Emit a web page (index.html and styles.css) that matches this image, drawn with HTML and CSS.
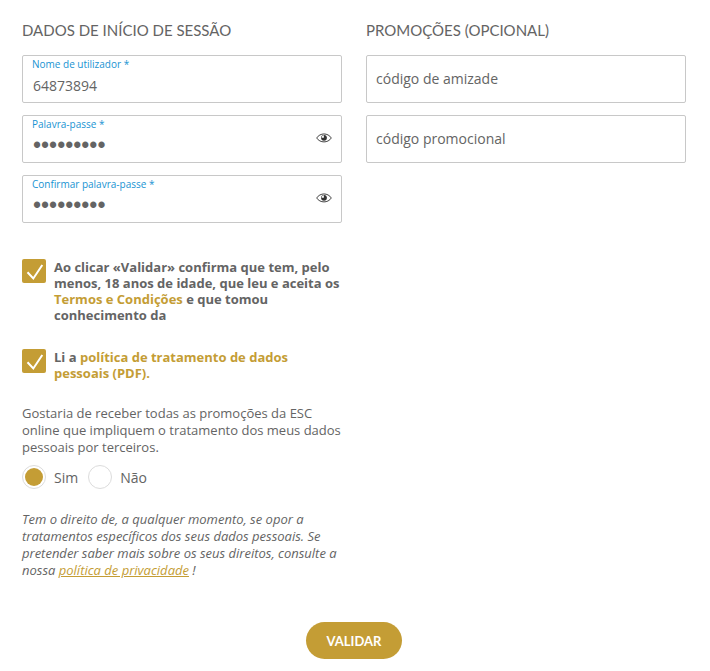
FILE: index.html
```html
<!DOCTYPE html>
<html lang="pt">
<head>
<meta charset="utf-8">
<meta name="viewport" content="width=device-width, initial-scale=1">
<title>Registo</title>
<link rel="stylesheet" href="styles.css">
</head>
<body>
<form class="form">
  <div class="columns">
    <section class="column">
      <h2 class="title">DADOS DE INÍCIO DE SESSÃO</h2>
      <div class="fields">
        <div class="field">
          <label class="field-label" for="user">Nome de utilizador *</label>
          <input class="field-input" id="user" type="text" value="64873894">
        </div>
        <div class="field">
          <label class="field-label" for="pass">Palavra-passe *</label>
          <input class="field-input secret" id="pass" type="password" value="123456789">
          <button class="reveal" type="button" aria-label="Mostrar palavra-passe">
            <svg width="16" height="12" viewBox="0 0 16 12"><path d="M.7 6C4 .6 12 .6 15.3 6 12 11.200 4 11.200.7 6Z" fill="none" stroke="#444" stroke-width="1"/><circle cx="8" cy="5.800" r="2.900" fill="#333"/><path d="M7.900 5.700V3.300A2.500 2.500 0 0 0 5.600 5.700Z" fill="#fff"/></svg>
          </button>
        </div>
        <div class="field">
          <label class="field-label" for="confirm">Confirmar palavra-passe *</label>
          <input class="field-input secret" id="confirm" type="password" value="123456789">
          <button class="reveal" type="button" aria-label="Mostrar confirmação">
            <svg width="16" height="12" viewBox="0 0 16 12"><path d="M.7 6C4 .6 12 .6 15.3 6 12 11.200 4 11.200.7 6Z" fill="none" stroke="#444" stroke-width="1"/><circle cx="8" cy="5.800" r="2.900" fill="#333"/><path d="M7.900 5.700V3.300A2.500 2.500 0 0 0 5.600 5.700Z" fill="#fff"/></svg>
          </button>
        </div>
      </div>

      <div class="consents">
        <div class="consent">
          <span class="check">
            <input class="check-input" id="terms" type="checkbox" checked>
            <svg class="check-mark" viewBox="0 0 24 24"><path d="M5.500 13.300 11.300 19.500 20.300 6" fill="none" stroke="#fff" stroke-width="2"/></svg>
          </span>
          <label class="consent-text" for="terms">Ao clicar «Validar» confirma que tem, pelo menos, 18 anos de idade, que leu e aceita os <a class="link" href="#">Termos e Condições</a> e que tomou conhecimento da</label>
        </div>
        <div class="consent">
          <span class="check">
            <input class="check-input" id="policy" type="checkbox" checked>
            <svg class="check-mark" viewBox="0 0 24 24"><path d="M5.500 13.300 11.300 19.500 20.300 6" fill="none" stroke="#fff" stroke-width="2"/></svg>
          </span>
          <label class="consent-text" for="policy">Li a <a class="link" href="#">política de tratamento de dados pessoais (PDF).</a></label>
        </div>
      </div>

      <p class="question" id="question">Gostaria de receber todas as promoções da ESC online que impliquem o tratamento dos meus dados pessoais por terceiros.</p>
      <div class="options" role="radiogroup" aria-labelledby="question">
        <label class="option"><input class="radio" type="radio" name="promo" checked>Sim</label>
        <label class="option"><input class="radio" type="radio" name="promo">Não</label>
      </div>
      <p class="notice">Tem o direito de, a qualquer momento, se opor a tratamentos específicos dos seus dados pessoais. Se pretender saber mais sobre os seus direitos, consulte a nossa <a class="link underlined" href="#">política de privacidade</a> !</p>
    </section>

    <section class="column">
      <h2 class="title">PROMOÇÕES (OPCIONAL)</h2>
      <div class="fields">
        <div class="field">
          <input class="field-input plain" type="text" placeholder="código de amizade" aria-label="código de amizade">
        </div>
        <div class="field">
          <input class="field-input plain" type="text" placeholder="código promocional" aria-label="código promocional">
        </div>
      </div>
    </section>
  </div>
  <div class="actions">
    <button class="submit" type="submit">VALIDAR</button>
  </div>
</form>
</body>
</html>
```
FILE: styles.css
```css
* { box-sizing: border-box; }

body {
  margin: 0;
  background: #fff;
  color: #646464;
  font-family: "Open Sans", "Noto Sans", sans-serif;
  font-size: 13px;
}

.form { padding: 20px 24px 12px 22px; }

.columns {
  display: grid;
  grid-template-columns: 1fr 1fr;
  gap: 24px;
}

.column { min-width: 0; }

.title {
  margin: 0 0 15px;
  font: 400 15px/20px Lato, sans-serif;
}

.fields {
  display: grid;
  gap: 12px;
}

.field {
  position: relative;
  height: 48px;
  border: 1px solid #c8c8c8;
  border-radius: 2px;
}

.field-label {
  position: absolute;
  top: 1px;
  left: 9px;
  color: #1893d2;
  font-size: 10px;
  line-height: 14px;
}

.field-input {
  display: block;
  width: 100%;
  height: 100%;
  padding: 12px 10px 0;
  border: 0;
  outline: 0;
  background: transparent;
  color: inherit;
  font: 14px "Open Sans", "Noto Sans", sans-serif;
}

.field-input.plain { padding: 0 9px 2px; }
.field-input.secret { font: 23px "Liberation Sans", sans-serif; }
.field-input::placeholder { color: #646464; opacity: 1; }

.reveal {
  position: absolute;
  top: 16px;
  right: 9px;
  display: flex;
  padding: 0;
  border: 0;
  background: none;
}

.consents {
  display: grid;
  gap: 26px;
  margin-top: 36px;
}

.consent {
  display: flex;
  gap: 8px;
}

.check {
  position: relative;
  flex: none;
  width: 24px;
  height: 24px;
}

.check-input {
  appearance: none;
  display: block;
  width: 24px;
  height: 24px;
  margin: 0;
  border-radius: 2px;
  background: #c49d35;
}

.check-mark {
  position: absolute;
  inset: 0;
  pointer-events: none;
  visibility: hidden;
}

.check-input:checked + .check-mark { visibility: visible; }

.consent-text {
  font-weight: 700;
  line-height: 16px;
}

.link {
  color: #c49d35;
  text-decoration: none;
}

.underlined { text-decoration: underline; }

.question {
  margin: 24px 0 9px;
  line-height: 17px;
}

.options {
  display: flex;
  gap: 10px;
  font-size: 14px;
}

.option {
  display: flex;
  align-items: center;
  gap: 8px;
}

.radio {
  appearance: none;
  width: 24px;
  height: 24px;
  margin: 0;
  border: 1px solid #dcdcdc;
  border-radius: 50%;
}

.radio:checked {
  background: #c49d35;
  background-clip: content-box;
  padding: 2px;
}

.notice {
  margin: 22px 0 0;
  font-style: italic;
  line-height: 17px;
}

.actions {
  display: flex;
  justify-content: center;
  margin-top: 43px;
}

.submit {
  height: 37px;
  padding: 0 21px;
  border: 0;
  border-radius: 19px;
  background: #c49d35;
  color: #fff;
  font: 700 13px Lato, sans-serif;
}
```
